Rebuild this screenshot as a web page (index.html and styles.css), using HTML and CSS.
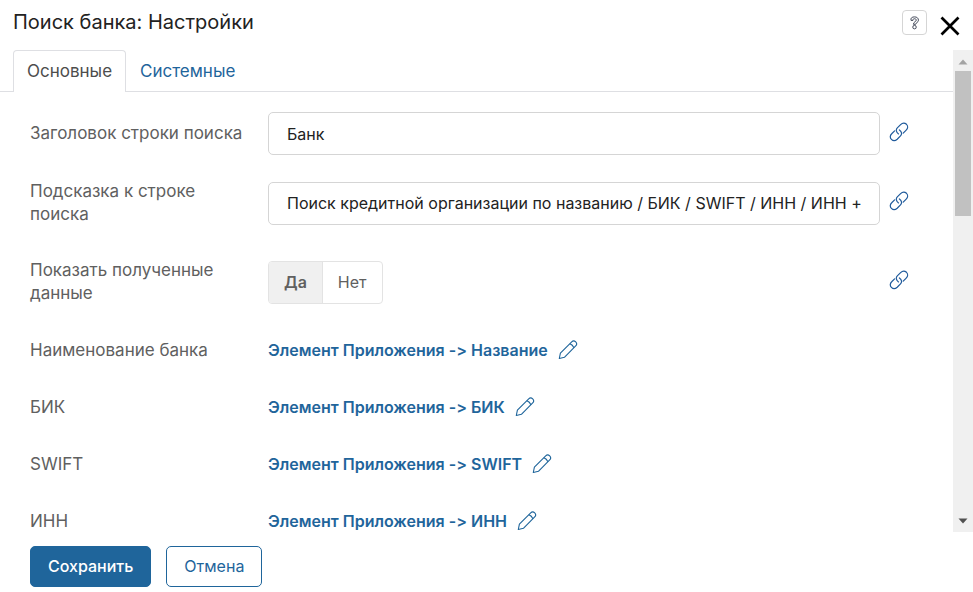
FILE: index.html
```html
<!DOCTYPE html>
<html lang="ru">
<head>
<meta charset="utf-8">
<meta name="viewport" content="width=device-width, initial-scale=1">
<title>Поиск банка: Настройки</title>
<link rel="stylesheet" href="styles.css">
</head>
<body>
<svg class="sprite" aria-hidden="true">
  <symbol id="link" viewBox="0 0 20 20">
    <g fill="none" stroke="currentColor" stroke-width="1.2" stroke-linecap="round">
      <path d="M9.500 11.900C7.100 10.300 6.600 7.600 8.300 5.900L11.600 2.600C13.400 .8 15.900 .8 17.500 2.300C19.100 3.900 19 6.300 17.200 8.100L14.200 11.100"/>
      <path d="M10.400 7.900C12.800 9.500 13.200 12.100 11.500 13.800L8.200 17.200C6.400 18.900 4 19 2.400 17.400C.8 15.900 .9 13.400 2.700 11.700L5.600 8.800"/>
    </g>
  </symbol>
  <symbol id="pencil" viewBox="0 0 20 20">
    <g fill="none" stroke="currentColor" stroke-width="1.1" stroke-linejoin="round">
      <path d="M1.300 18.500L2.400 13.200L13.700 1.900C14.900 .7 16.500 .7 17.700 1.900C18.900 3.100 18.900 4.700 17.700 5.900L6.400 17.300Z"/>
      <path d="M11.900 3.700Q14.700 4.700 15.900 7.700"/>
    </g>
  </symbol>
</svg>
<header class="header">
  <h1 class="title">Поиск банка: Настройки</h1>
  <button class="help" type="button" aria-label="Справка">
    <svg viewBox="0 0 12 16" aria-hidden="true"><g fill="none" stroke="currentColor" stroke-width="1.100"><path d="M2 5C1.300 2.300 3.300 1 6 1C8.800 1 10.500 2.500 10.500 4.800C10.500 7.500 7.500 7.500 7.300 9.500H4.800C4.800 6.500 8 6.500 8 4.800C8 3.600 7.200 3.100 6 3.100C4.700 3.100 4.200 3.800 4.300 5Z"/><circle cx="6" cy="12.700" r="2"/></g></svg>
  </button>
  <button class="close" type="button" aria-label="Закрыть">
    <svg viewBox="0 0 20 20" aria-hidden="true"><path d="M1.500 1.500L18.500 18.500M18.500 1.500L1.500 18.500" stroke="currentColor" stroke-width="2.700"/></svg>
  </button>
</header>
<main class="viewport">
  <div class="content">
    <nav class="tabs">
      <a class="tab tab-active" href="#main">Основные</a>
      <a class="tab" href="#system">Системные</a>
    </nav>
    <form class="form" id="settings">
      <div class="row row-single">
        <label class="label" for="caption">Заголовок строки поиска</label>
        <input class="input" id="caption" type="text" value="Банк">
        <button class="bind" type="button" aria-label="Связать заголовок"><svg class="icon"><use href="#link"/></svg></button>
      </div>
      <div class="row">
        <label class="label" for="hint">Подсказка к строке поиска</label>
        <input class="input" id="hint" type="text" value="Поиск кредитной организации по названию / БИК / SWIFT / ИНН / ИНН + КПП">
        <button class="bind" type="button" aria-label="Связать подсказку"><svg class="icon"><use href="#link"/></svg></button>
      </div>
      <div class="row">
        <span class="label" id="show-label">Показать полученные данные</span>
        <div class="toggle" role="group" aria-labelledby="show-label">
          <button class="option option-active" type="button" aria-pressed="true">Да</button>
          <button class="option" type="button" aria-pressed="false">Нет</button>
        </div>
        <button class="bind" type="button" aria-label="Связать показ данных"><svg class="icon"><use href="#link"/></svg></button>
      </div>
      <div class="row">
        <span class="label">Наименование банка</span>
        <a class="value" href="#name">Элемент Приложения -&gt; Название <svg class="icon" aria-hidden="true"><use href="#pencil"/></svg></a>
      </div>
      <div class="row">
        <span class="label">БИК</span>
        <a class="value" href="#bik">Элемент Приложения -&gt; БИК <svg class="icon" aria-hidden="true"><use href="#pencil"/></svg></a>
      </div>
      <div class="row">
        <span class="label">SWIFT</span>
        <a class="value" href="#swift">Элемент Приложения -&gt; SWIFT <svg class="icon" aria-hidden="true"><use href="#pencil"/></svg></a>
      </div>
      <div class="row">
        <span class="label">ИНН</span>
        <a class="value" href="#inn">Элемент Приложения -&gt; ИНН <svg class="icon" aria-hidden="true"><use href="#pencil"/></svg></a>
      </div>
    </form>
  </div>
  <div class="scrollbar" aria-hidden="true">
    <svg class="arrow arrow-up" viewBox="0 0 20 20"><path d="M5.500 14L10 9L14.500 14Z"/></svg>
    <div class="track"><div class="thumb"></div></div>
    <svg class="arrow" viewBox="0 0 20 20"><path d="M5.500 7L10 12L14.500 7Z"/></svg>
  </div>
</main>
<footer class="footer">
  <button class="button button-primary" type="submit" form="settings">Сохранить</button>
  <button class="button" type="button">Отмена</button>
</footer>
</body>
</html>
```

FILE: styles.css
```css
* {
  box-sizing: border-box;
}

body {
  display: flex;
  flex-direction: column;
  height: 100vh;
  margin: 0;
  overflow: hidden;
  background: #fff;
  color: #606060;
  font: 17px/23px Inter, "Liberation Sans", sans-serif;
  font-variant-ligatures: none;
}

button,
input {
  margin: 0;
  font: inherit;
  font-size: 16px;
}

button {
  padding: 0;
  border: 0;
  background: none;
  cursor: pointer;
}

a {
  color: #1f659b;
  text-decoration: none;
}

.sprite {
  display: none;
}

.header {
  display: flex;
  align-items: center;
  height: 50px;
  padding: 0 13px 5px;
}

.title {
  flex: 1;
  margin: 0;
  color: #222;
  font-size: 20px;
  font-weight: 400;
}

.help {
  display: grid;
  place-items: center;
  width: 25px;
  height: 25px;
  margin-right: 13px;
  border: 1px solid #d5d5d5;
  border-radius: 4px;
  color: #3d4454;
}

.help svg {
  width: 11px;
  height: 14px;
}

.close {
  display: flex;
  padding-top: 7px;
  color: #000;
}

.close svg {
  width: 20px;
  height: 20px;
}

.viewport {
  display: flex;
  flex: 1;
  min-height: 0;
}

.content {
  flex: 1;
  min-width: 0;
  overflow: hidden;
}

.tabs {
  display: flex;
  height: 42px;
  padding-left: 13px;
  border-bottom: 1px solid #dedfe3;
}

.tab {
  height: 42px;
  padding: 9px 13px;
  border: 1px solid transparent;
  border-bottom: 0;
}

.tab-active {
  border-color: #dedfe3;
  border-radius: 4px 4px 0 0;
  background: #fff;
  color: #4d4d4d;
}

.form {
  display: flex;
  flex-direction: column;
  gap: 33px;
  padding: 20px 44px 0 30px;
}

.row {
  display: grid;
  grid-template-columns: 226px 1fr 20px;
  align-items: center;
  min-height: 24px;
}

.row-single {
  margin-bottom: -8px;
}

.input,
.toggle,
.value {
  margin: 0 9px 0 12px;
}

.input {
  min-width: 0;
  height: 43px;
  padding: 0 15px 0 18px;
  border: 1px solid #d5d5d5;
  border-radius: 5px;
  background: #fff;
  color: #222;
}

.icon {
  display: block;
  flex: none;
  width: 20px;
  height: 20px;
}

.bind {
  padding-bottom: 4px;
  color: #1f5a9b;
}

.toggle {
  display: flex;
  justify-self: start;
  height: 43px;
  border: 1px solid #e3e3e3;
  border-radius: 4px;
  overflow: hidden;
}

.option {
  padding: 0 15px;
  color: #606060;
}

.option-active {
  border-right: 1px solid #e3e3e3;
  background: #f0f0f0;
  font-weight: 600;
}

.value {
  display: flex;
  gap: 10px;
  align-items: center;
  font-size: 16px;
  font-weight: 600;
}

.scrollbar {
  display: flex;
  flex-direction: column;
  width: 20px;
  background: #f0f0f0;
}

.arrow {
  width: 20px;
  height: 21px;
  fill: #505050;
}

.arrow-up {
  fill: #a3a3a3;
}

.track {
  flex: 1;
  padding: 0 2px;
}

.thumb {
  height: 33%;
  background: #c1c1c1;
}

.footer {
  display: flex;
  gap: 15px;
  padding: 14px 30px 5px;
}

.button {
  height: 41px;
  padding: 0 17px;
  border: 1px solid #1f659b;
  border-radius: 5px;
  color: #1f659b;
}

.button-primary {
  background: #1f659b;
  color: #fff;
  font-weight: 500;
}
```
